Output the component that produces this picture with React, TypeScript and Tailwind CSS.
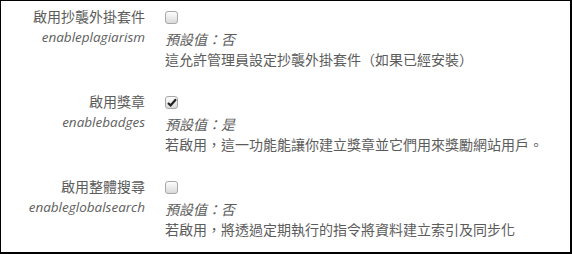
const settings = [
  {
    label: '啟用抄襲外掛套件',
    name: 'enableplagiarism',
    checked: false,
    defaultValue: '否',
    description: '這允許管理員設定抄襲外掛套件（如果已經安裝）',
  },
  {
    label: '啟用獎章',
    name: 'enablebadges',
    checked: true,
    defaultValue: '是',
    description: '若啟用，這一功能能讓你建立獎章並它們用來獎勵網站用戶。',
  },
  {
    label: '啟用整體搜尋',
    name: 'enableglobalsearch',
    checked: false,
    defaultValue: '否',
    description: '若啟用，將透過定期執行的指令將資料建立索引及同步化',
  },
];

const Checkbox = ({ checked }: { checked: boolean }) => (
  <span className="w-[13px] h-[13px] rounded-[3px] border border-[#a8a8a8] bg-gradient-to-b from-[#fdfdfd] to-[#dadada] flex items-center justify-center">
    {checked && (
      <svg width="10" height="9" viewBox="0 0 10 9">
        <path d="M1 5 L3.6 7.4 L9 1.2" fill="none" stroke="#222" strokeWidth="2.2" />
      </svg>
    )}
  </span>
);

export default function App() {
  return (
    <div
      className="w-[572px] h-[254px] bg-white border-l border-t border-r-2 border-b-2 border-black pt-[6px] text-[14px] text-[#5c5c5c]"
      style={{ fontFamily: '"Open Sans", "Noto Sans CJK TC", sans-serif' }}
    >
      <div className="flex flex-col gap-[23px]">
        {settings.map((s) => (
          <div key={s.name} className="flex gap-[20px]">
            {/* Label + setting name */}
            <div className="w-[144px] shrink-0 text-right">
              <div className="leading-[20px]">{s.label}</div>
              <div className="leading-[20px] italic text-[13.5px] text-[#606060]">{s.name}</div>
            </div>
            {/* Control + default + description */}
            <div className="flex-1 min-w-0">
              <div className="h-[21px] flex items-center">
                <Checkbox checked={s.checked} />
              </div>
              <div className="leading-[20px] mt-[2px] italic">預設值：{s.defaultValue}</div>
              <div className="leading-[19px]">{s.description}</div>
            </div>
          </div>
        ))}
      </div>
    </div>
  );
}
